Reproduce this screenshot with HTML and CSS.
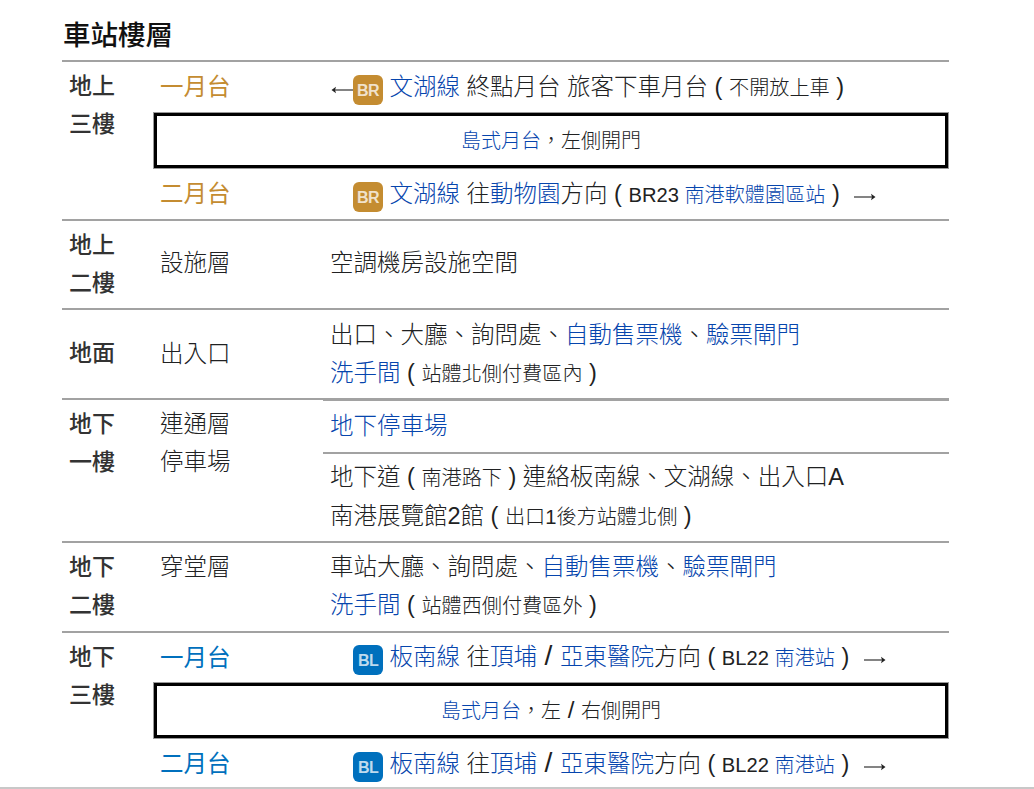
FILE: index.html
```html
<!DOCTYPE html>
<html lang="zh-Hant">
<head>
<meta charset="utf-8">
<title>車站樓層</title>
<link rel="stylesheet" href="styles.css">
</head>
<body>
<div class="page">
<h3 class="title">車站樓層</h3>
<table class="floors">
<colgroup><col class="c1"><col class="c2"><col class="c3"></colgroup>
<tbody>
<tr class="first">
  <th rowspan="3" class="level">地上<br>三樓</th>
  <td class="plat br">一月台</td>
  <td class="info"><svg class="arrow lead" viewBox="0 0 22 10" aria-label="←"><path class="shaft" d="M3 5H22"/><path class="head" d="M0.5 5L5 1.8L4 5L5 8.2Z"/></svg><span class="badge br-bg">BR</span> <a>文湖線</a> 終點月台 旅客下車月台 ( <small>不開放上車</small> )</td>
</tr>
<tr>
  <td colspan="2" class="island"><div class="island-box"><a>島式月台</a>，左側開門</div></td>
</tr>
<tr class="last">
  <td class="plat br">二月台</td>
  <td class="info"><span class="badge br-bg indent">BR</span> <a>文湖線</a> 往<a>動物園</a>方向 ( <small>BR23 <a>南港軟體園區站</a></small> ) <svg class="arrow right" viewBox="0 0 22 10" aria-label="→"><path class="shaft" d="M0 5H19"/><path class="head" d="M21.5 5L17 1.8L18 5L17 8.2Z"/></svg></td>
</tr>
<tr class="sep h88">
  <th class="level mid">地上<br>二樓</th>
  <td class="lift">設施層</td>
  <td class="info lift">空調機房設施空間</td>
</tr>
<tr class="sep h89">
  <th class="level mid">地面</th>
  <td>出入口</td>
  <td class="info">出口、大廳、詢問處、<a>自動售票機</a>、<a>驗票閘門</a><br><a>洗手間</a> ( <small>站體北側付費區內</small> )</td>
</tr>
<tr class="sep thick">
  <th rowspan="2" class="level">地下<br>一樓</th>
  <td rowspan="2" class="top">連通層<br>停車場</td>
  <td class="info"><a>地下停車場</a></td>
</tr>
<tr class="inner">
  <td class="info">地下道 ( <small>南港路下</small> ) 連絡板南線、文湖線、出入口A<br>南港展覽館2館 ( <small>出口1後方站體北側</small> )</td>
</tr>
<tr class="sep h89">
  <th class="level">地下<br>二樓</th>
  <td class="top">穿堂層</td>
  <td class="info nudge">車站大廳、詢問處、<a>自動售票機</a>、<a>驗票閘門</a><br><a>洗手間</a> ( <small>站體西側付費區外</small> )</td>
</tr>
<tr class="sep first lower">
  <th rowspan="3" class="level">地下<br>三樓</th>
  <td class="plat bl">一月台</td>
  <td class="info"><span class="badge bl-bg indent">BL</span> <a>板南線</a> 往<a>頂埔</a> <span class="slash">/</span> <a>亞東醫院</a>方向 ( <small>BL22 <a>南港站</a></small> ) <svg class="arrow right" viewBox="0 0 22 10" aria-label="→"><path class="shaft" d="M0 5H19"/><path class="head" d="M21.5 5L17 1.8L18 5L17 8.2Z"/></svg></td>
</tr>
<tr>
  <td colspan="2" class="island"><div class="island-box"><a>島式月台</a>，左 <span class="slash">/</span> 右側開門</div></td>
</tr>
<tr class="last">
  <td class="plat bl">二月台</td>
  <td class="info"><span class="badge bl-bg indent">BL</span> <a>板南線</a> 往<a>頂埔</a> <span class="slash">/</span> <a>亞東醫院</a>方向 ( <small>BL22 <a>南港站</a></small> ) <svg class="arrow right" viewBox="0 0 22 10" aria-label="→"><path class="shaft" d="M0 5H19"/><path class="head" d="M21.5 5L17 1.8L18 5L17 8.2Z"/></svg></td>
</tr>
</tbody>
</table>
</div>
</body>
</html>
```
FILE: styles.css
```css
html, body {
  margin: 0;
  padding: 0;
  background: #fff;
}
body {
  overflow: hidden;
  font-family: "Liberation Sans", "Noto Sans CJK TC", sans-serif;
  font-weight: 300;
  color: #202122;
}
.page {
  box-sizing: border-box;
  height: 789px;
  padding: 0 85px 0 62px;
  overflow: hidden;
  border-bottom: 2px solid #c8c8c8;
}
.title {
  margin: 0;
  padding: 18px 0 0 1px;
  height: 42px;
  font-size: 27.5px;
  line-height: 35px;
  font-weight: 500;
  color: #111;
}
.floors {
  width: 887px;
  table-layout: fixed;
  border-collapse: separate;
  border-spacing: 0;
  font-size: 23.5px;
  line-height: 38px;
  border-top: 2px solid #a2a2a2;
}
.c1 { width: 91px; }
.c2 { width: 170px; }
th, td {
  box-sizing: border-box;
  padding: 0;
  vertical-align: middle;
  text-align: left;
  font-weight: 300;
}
td { padding-left: 7px; }
a { color: #0645ad; }
small { font-size: 20.15px; }
.level {
  padding-left: 7px;
  font-weight: 500;
  vertical-align: top;
  padding-top: 6px;
  line-height: 37.5px;
  font-size: 23px;
  color: #333;
}
.level.mid { vertical-align: middle; padding-top: 0; }
td.top { vertical-align: top; padding-top: 6px; line-height: 37.5px; }
td.lift { padding-bottom: 3px; }
td.nudge { padding-bottom: 1px; }
.sep > th, .sep > td { border-top: 2px solid #a2a2a2; }
.h88 > th, .h88 > td { height: 89px; }
.h89 > th, .h89 > td { height: 90px; }
.thick > th, .thick > td { vertical-align: top; }
.thick > td.info { border-top-width: 3px; height: 54px; padding-top: 6px; }
.inner > td { border-top: 2px solid #a2a2a2; height: 89px; padding-bottom: 2px; }
.first > td { height: 50px; }
.lower > td { height: 51px; }
.last > td { height: 50px; }
.plat { font-weight: 400; }
.plat.br { color: #c48c31; }
.plat.bl { color: #0070bd; }
.info { white-space: nowrap; }
.slash { margin: 0 1px; font-size: 1.2em; line-height: 1; }
.island {
  padding: 0;
  height: 57px;
}
.island-box {
  box-sizing: border-box;
  height: 55px;
  margin: 1px;
  border: 3px solid #000;
  outline: 1px solid #9a9a9a;
  font-size: 20px;
  line-height: 51px;
  text-align: center;
}
.badge {
  display: inline-block;
  width: 30px;
  height: 30px;
  border-radius: 6px;
  color: rgba(255, 255, 255, 0.75);
  font-size: 16px;
  letter-spacing: -0.6px;
  line-height: 31px;
  text-align: center;
  font-weight: bold;
  vertical-align: -1px;
}
.br-bg { background: #c48c31; }
.bl-bg { background: #0070bd; }
.indent { margin-left: 23px; }
.arrow {
  width: 22px;
  height: 10px;
  vertical-align: 0;
}
.lead { margin-left: 1px; }
.right { margin-left: 8px; }
.shaft { stroke: #666; stroke-width: 1.6; fill: none; }
.head { fill: #222; }
```
